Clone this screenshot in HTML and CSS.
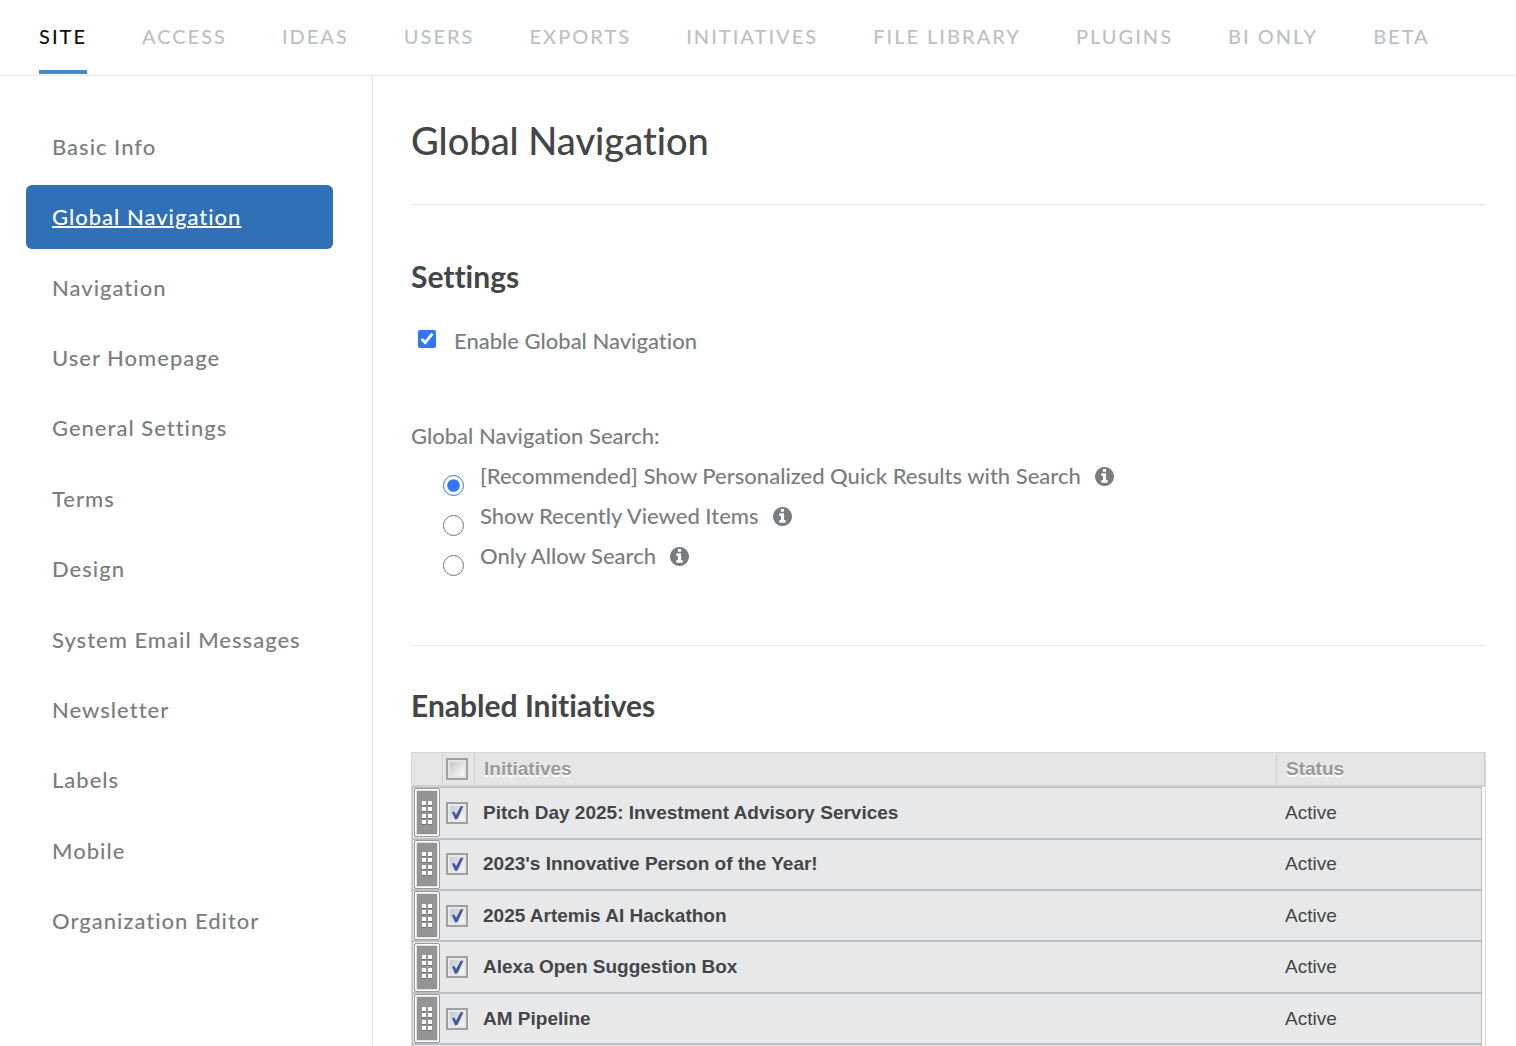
FILE: index.html
```html
<!DOCTYPE html>
<html lang="en">
<head>
    <meta charset="UTF-8">
    <meta name="viewport" content="width=device-width, initial-scale=1.0">
    <title>Global Navigation</title>
    <link rel="stylesheet" href="styles.css">
</head>
<body>
    <!-- shared icons -->
    <svg class="sprite" aria-hidden="true">
        <symbol id="info" viewBox="0 0 1536 1536">
            <path d="M1024 1248v-160q0-14-9-23t-23-9h-96V544q0-14-9-23t-23-9H544q-14 0-23 9t-9 23v160q0 14 9 23t23 9h96v320h-96q-14 0-23 9t-9 23v160q0 14 9 23t23 9h448q14 0 23-9t9-23zM896 352V192q0-14-9-23t-23-9H672q-14 0-23 9t-9 23v160q0 14 9 23t23 9h192q14 0 23-9t9-23zm640 416q0 209-103 385.500T1153.500 1433 768 1536t-385.500-103T103 1153.500 0 768t103-385.500T382.500 103 768 0t385.500 103T1433 382.500 1536 768z"/>
        </symbol>
        <symbol id="grip" viewBox="0 0 12 26">
            <path fill="#717171" d="M1 4h4v2H1zM7 4h4v2H7zM1 10h4v2H1zM7 10h4v2H7zM1 17h4v2H1zM7 17h4v2H7zM1 23h4v2H1zM7 23h4v2H7z"/>
            <path fill="#fff" d="M1 1h4v4H1zM7 1h4v4H7zM1 7h4v4H1zM7 7h4v4H7zM1 14h4v4H1zM7 14h4v4H7zM1 20h4v4H1zM7 20h4v4H7z"/>
        </symbol>
    </svg>

    <nav class="topnav">
        <a href="#" class="active">SITE</a>
        <a href="#">ACCESS</a>
        <a href="#">IDEAS</a>
        <a href="#">USERS</a>
        <a href="#">EXPORTS</a>
        <a href="#">INITIATIVES</a>
        <a href="#">FILE LIBRARY</a>
        <a href="#">PLUGINS</a>
        <a href="#">BI ONLY</a>
        <a href="#">BETA</a>
    </nav>

    <div class="page">
        <aside class="sidebar">
            <ul>
                <li><a href="#">Basic Info</a></li>
                <li><a href="#" class="active">Global Navigation</a></li>
                <li><a href="#">Navigation</a></li>
                <li><a href="#">User Homepage</a></li>
                <li><a href="#">General Settings</a></li>
                <li><a href="#">Terms</a></li>
                <li><a href="#">Design</a></li>
                <li><a href="#">System Email Messages</a></li>
                <li><a href="#">Newsletter</a></li>
                <li><a href="#">Labels</a></li>
                <li><a href="#">Mobile</a></li>
                <li><a href="#">Organization Editor</a></li>
            </ul>
        </aside>

        <main class="content">
            <h1>Global Navigation</h1>

            <section class="settings">
                <h2>Settings</h2>
                <div class="enable">
                    <input type="checkbox" id="enableNav" checked>
                    <label for="enableNav">Enable Global Navigation</label>
                </div>

                <fieldset>
                    <legend>Global Navigation Search:</legend>
                    <div class="option">
                        <input type="radio" name="search" id="searchQuick" checked>
                        <label for="searchQuick">[Recommended] Show Personalized Quick Results with Search</label>
                        <svg class="info"><use href="#info"/></svg>
                    </div>
                    <div class="option">
                        <input type="radio" name="search" id="searchRecent">
                        <label for="searchRecent">Show Recently Viewed Items</label>
                        <svg class="info"><use href="#info"/></svg>
                    </div>
                    <div class="option">
                        <input type="radio" name="search" id="searchOnly">
                        <label for="searchOnly">Only Allow Search</label>
                        <svg class="info"><use href="#info"/></svg>
                    </div>
                </fieldset>
            </section>

            <section class="initiatives">
                <h2>Enabled Initiatives</h2>
                <div class="grid">
                    <table>
                        <colgroup>
                            <col class="col-grip">
                            <col class="col-check">
                            <col>
                            <col class="col-status">
                            <col class="col-gutter">
                        </colgroup>
                        <thead>
                            <tr>
                                <th></th>
                                <th><input type="checkbox" class="tick" aria-label="Select all"></th>
                                <th class="name">Initiatives</th>
                                <th class="status" colspan="2">Status</th>
                            </tr>
                        </thead>
                        <tbody>
                            <tr>
                                <td><button class="grip" aria-label="Move"><svg><use href="#grip"/></svg></button></td>
                                <td><input type="checkbox" class="tick" id="i1" checked></td>
                                <td class="name"><label for="i1">Pitch Day 2025: Investment Advisory Services</label></td>
                                <td class="status">Active</td>
                                <td class="gutter"></td>
                            </tr>
                            <tr>
                                <td><button class="grip" aria-label="Move"><svg><use href="#grip"/></svg></button></td>
                                <td><input type="checkbox" class="tick" id="i2" checked></td>
                                <td class="name"><label for="i2">2023's Innovative Person of the Year!</label></td>
                                <td class="status">Active</td>
                                <td class="gutter"></td>
                            </tr>
                            <tr>
                                <td><button class="grip" aria-label="Move"><svg><use href="#grip"/></svg></button></td>
                                <td><input type="checkbox" class="tick" id="i3" checked></td>
                                <td class="name"><label for="i3">2025 Artemis AI Hackathon</label></td>
                                <td class="status">Active</td>
                                <td class="gutter"></td>
                            </tr>
                            <tr>
                                <td><button class="grip" aria-label="Move"><svg><use href="#grip"/></svg></button></td>
                                <td><input type="checkbox" class="tick" id="i4" checked></td>
                                <td class="name"><label for="i4">Alexa Open Suggestion Box</label></td>
                                <td class="status">Active</td>
                                <td class="gutter"></td>
                            </tr>
                            <tr>
                                <td><button class="grip" aria-label="Move"><svg><use href="#grip"/></svg></button></td>
                                <td><input type="checkbox" class="tick" id="i5" checked></td>
                                <td class="name"><label for="i5">AM Pipeline</label></td>
                                <td class="status">Active</td>
                                <td class="gutter"></td>
                            </tr>
                            <tr>
                                <td><button class="grip" aria-label="Move"><svg><use href="#grip"/></svg></button></td>
                                <td></td>
                                <td class="name"></td>
                                <td class="status"></td>
                                <td class="gutter"></td>
                            </tr>
                        </tbody>
                    </table>
                </div>
            </section>
        </main>
    </div>
</body>
</html>
```
FILE: styles.css
```css
* {
    box-sizing: border-box;
}

body {
    margin: 0;
    height: 100vh;
    display: flex;
    flex-direction: column;
    overflow: hidden;
    font-family: Lato, sans-serif;
    font-size: 22px;
    font-weight: 500;
    font-variant-ligatures: none;
    color: #7a7d80;
    background: #fff;
}

.sprite {
    display: none;
}

/* top bar */
.topnav {
    display: flex;
    flex-shrink: 0;
    gap: 55px;
    height: 76px;
    padding: 0 39px;
    border-bottom: 1px solid #e6e7e8;
}

.topnav a {
    height: 74px;
    border-bottom: 4px solid transparent;
    font-size: 20px;
    line-height: 72px;
    letter-spacing: 2px;
    white-space: nowrap;
    text-decoration: none;
    color: #bcc1c5;
}

.topnav a.active {
    color: #111;
    border-bottom-color: #4a89cb;
}

.page {
    display: flex;
    flex: 1;
    min-height: 0;
}

/* left menu */
.sidebar {
    flex: 0 0 373px;
    padding: 39px 39px 0 26px;
    border-right: 1px solid #e6e7e8;
}

.sidebar ul {
    display: flex;
    flex-direction: column;
    justify-content: space-between;
    min-height: 838px;
    margin: 0;
    padding: 0;
    list-style: none;
}

.sidebar a {
    display: block;
    padding: 0 26px;
    border-radius: 6px;
    line-height: 64px;
    letter-spacing: 1px;
    white-space: nowrap;
    text-decoration: none;
    color: #7a7d80;
}

.sidebar a.active {
    background: #2f70b7;
    color: #fff;
    text-decoration: underline;
    text-decoration-thickness: 2px;
}

/* main column */
.content {
    flex: 1;
    min-width: 0;
    padding: 0 30px 0 38px;
}

h1 {
    margin: 0;
    padding: 40px 0;
    border-bottom: 1px solid #e6e7e8;
    font-size: 38px;
    font-weight: 500;
    line-height: 48px;
    color: #434547;
}

h2 {
    margin: 0;
    font-size: 30px;
    font-weight: 700;
    line-height: 36px;
    color: #434547;
}

.settings {
    padding: 53px 0 69px;
    border-bottom: 1px solid #e6e7e8;
}

.enable {
    display: flex;
    margin-top: 27px;
    line-height: 40px;
}

.enable input {
    width: 18px;
    height: 18px;
    margin: 9px 18px 0 7px;
    accent-color: #3076f6;
}

fieldset {
    margin: 55px 0 0;
    padding: 0;
    border: 0;
    line-height: 40px;
}

legend {
    padding: 0;
}

.option {
    display: flex;
    align-items: center;
    height: 40px;
    padding-left: 32px;
}

.option input {
    width: 21px;
    height: 21px;
    margin: 18px 16px 0 0;
    accent-color: #3076f6;
}

.info {
    width: 19px;
    height: 19px;
    margin-left: 14px;
    fill: #7a7d80;
}

.initiatives {
    padding-top: 41px;
}

/* initiatives table */
.grid {
    margin-top: 29px;
    border: 1px solid #d6d6d6;
    font-family: "Liberation Sans", Arial, sans-serif;
    font-size: 19px;
    font-weight: 400;
    color: #434547;
}

table {
    width: 100%;
    height: 344px;
    table-layout: fixed;
    border-collapse: separate;
    border-spacing: 0;
}

.col-grip {
    width: 31px;
}

.col-check {
    width: 32px;
}

.col-status {
    width: 205px;
}

.col-gutter {
    width: 3px;
}

th {
    height: 34px;
    padding: 0;
    border-right: 1px solid #d0d0d0;
    border-bottom: 2px solid #d0d0d0;
    background: #e5e5e5;
    color: #999;
    text-align: left;
    text-shadow: 0 2px 0 #fff;
}

td {
    padding: 0;
    border-bottom: 2px solid #bac0c5;
    background: #e7e8ea;
}

td:first-child {
    border-left: 1px solid #bac0c5;
    vertical-align: middle;
}

tbody tr:first-child td:not(.gutter) {
    border-top: 1px solid #bbb;
}

.name {
    padding-left: 8px;
    font-weight: 700;
}

.status {
    padding-left: 8px;
}

th.name,
th.status {
    padding-left: 9px;
}

td.status {
    border-right: 1px solid #bac0c5;
}

td.gutter {
    border: 0;
    background: #fff;
}

.grip {
    display: flex;
    align-items: center;
    justify-content: center;
    width: 26px;
    height: 49px;
    margin: 0 0 0 1px;
    padding: 0;
    border: 1px solid #999;
    border-radius: 2px;
    background: #949494;
    box-shadow: inset 0 0 0 1px #fff, inset 0 0 0 2px #e2e2e2;
    cursor: move;
}

.grip svg {
    width: 12px;
    height: 26px;
}

.tick {
    display: block;
    appearance: none;
    width: 22px;
    height: 22px;
    margin: 0 0 0 3px;
    border: 2px solid #a0a0a0;
    background: linear-gradient(135deg, #c5c9cd, #f8f8f8) content-box #f7f7f7;
    padding: 2px;
}

.tick:checked::before {
    content: "";
    display: block;
    width: 14px;
    height: 14px;
    background: #46589f;
    clip-path: polygon(14% 45%, 32% 42%, 43% 64%, 76% 4%, 96% 4%, 54% 94%, 36% 98%);
}
```
